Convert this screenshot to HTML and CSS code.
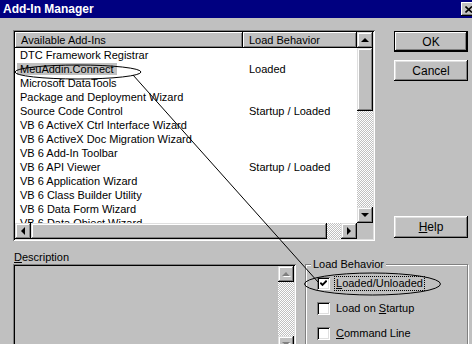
FILE: index.html
```html
<!DOCTYPE html>
<html lang="en">

<head>
    <meta charset="UTF-8">
    <title>Add-In Manager</title>
    <link rel="stylesheet" href="styles.css">
</head>

<body>
    <div class="titlebar">
        <span class="title">Add-In Manager</span>
        <span class="close">
            <svg width="8" height="7" viewBox="0 0 8 7"><path d="M0.5 0.5 L7 6.5 M7 0.5 L0.5 6.5" stroke="#000" stroke-width="1.6" /></svg>
        </span>
    </div>

    <div class="main">
        <div class="listbox">
            <div class="listarea">
                <div class="row head">
                    <div class="c1">Available Add-Ins</div>
                    <div class="c2">Load Behavior</div>
                </div>
                <div class="row"><div class="c1"><span>DTC Framework Registrar</span></div><div class="c2"></div></div>
                <div class="row"><div class="c1"><span class="sel">MeuAddin.Connect</span></div><div class="c2">Loaded</div></div>
                <div class="row"><div class="c1"><span>Microsoft DataTools</span></div><div class="c2"></div></div>
                <div class="row"><div class="c1"><span>Package and Deployment Wizard</span></div><div class="c2"></div></div>
                <div class="row"><div class="c1"><span>Source Code Control</span></div><div class="c2">Startup / Loaded</div></div>
                <div class="row"><div class="c1"><span>VB 6 ActiveX Ctrl Interface Wizard</span></div><div class="c2"></div></div>
                <div class="row"><div class="c1"><span>VB 6 ActiveX Doc Migration Wizard</span></div><div class="c2"></div></div>
                <div class="row"><div class="c1"><span>VB 6 Add-In Toolbar</span></div><div class="c2"></div></div>
                <div class="row"><div class="c1"><span>VB 6 API Viewer</span></div><div class="c2">Startup / Loaded</div></div>
                <div class="row"><div class="c1"><span>VB 6 Application Wizard</span></div><div class="c2"></div></div>
                <div class="row"><div class="c1"><span>VB 6 Class Builder Utility</span></div><div class="c2"></div></div>
                <div class="row"><div class="c1"><span>VB 6 Data Form Wizard</span></div><div class="c2"></div></div>
                <div class="row"><div class="c1"><span>VB 6 Data Object Wizard</span></div><div class="c2"></div></div>
            </div>
            <div class="vscroll">
                <div class="sbtn"><i class="arrow up"></i></div>
                <div class="thumb vthumb"></div>
                <div class="track"></div>
                <div class="sbtn"><i class="arrow down"></i></div>
            </div>
            <div class="hscroll">
                <div class="sbtn"><i class="arrow left"></i></div>
                <div class="thumb hthumb"></div>
                <div class="track"></div>
                <div class="sbtn"><i class="arrow right"></i></div>
            </div>
            <div class="corner"></div>
        </div>

        <div class="buttons">
            <button class="btn default">OK</button>
            <button class="btn cancel">Cancel</button>
            <button class="btn help"><u>H</u>elp</button>
        </div>
    </div>

    <div class="lower">
        <div class="desc">
            <div class="desc-label"><u>D</u>escription</div>
            <div class="desc-box">
                <div class="desc-text"></div>
                <div class="vscroll off">
                    <div class="sbtn"><i class="arrow up"></i></div>
                    <div class="track"></div>
                    <div class="sbtn"><i class="arrow down"></i></div>
                </div>
            </div>
        </div>

        <fieldset class="group">
            <legend>Load Behavior</legend>
            <div class="check">
                <span class="box">
                    <svg width="7" height="7" viewBox="0 0 7 7"><path d="M0.3 2.6 L2.5 4.9 L6.7 0.6" fill="none" stroke="#000" stroke-width="1.9" /></svg>
                </span>
                <span class="focus"><u>L</u>oaded/Unloaded</span>
            </div>
            <div class="check">
                <span class="box"></span>
                <span class="label">Load on <u>S</u>tartup</span>
            </div>
            <div class="check">
                <span class="box"></span>
                <span class="label"><u>C</u>ommand Line</span>
            </div>
        </fieldset>
    </div>

    <!-- hand drawn marks over the dialog -->
    <svg class="marks" width="472" height="344" viewBox="0 0 472 344">
        <ellipse cx="78" cy="72" rx="63" ry="7" fill="none" stroke="#000" stroke-width="1" />
        <ellipse cx="372.5" cy="284" rx="68" ry="11" fill="none" stroke="#000" stroke-width="1" />
        <line x1="133" y1="75" x2="318" y2="282" stroke="#000" stroke-width="1" />
    </svg>
</body>

</html>
```

FILE: styles.css
```css
html,
body {
    margin: 0;
    overflow: hidden;
}

body {
    position: relative;
    width: 472px;
    height: 344px;
    background: #c0c0c0;
    font-family: "Liberation Sans", Arial, sans-serif;
    font-size: 11px;
    color: #000;
}

.titlebar {
    display: flex;
    align-items: center;
    justify-content: space-between;
    height: 18px;
    padding-left: 3px;
    background: #000080;
    color: #fff;
    font-weight: bold;
    font-size: 12px;
    line-height: 18px;
    overflow: hidden;
}

.close {
    display: flex;
    align-items: center;
    justify-content: center;
    flex-shrink: 0;
    width: 16px;
    height: 14px;
    margin-right: -5px;
    background: #c0c0c0;
    box-shadow: inset -1px -1px #000, inset 1px 1px #fff, inset -2px -2px #808080;
}

.main {
    display: flex;
    padding: 12px 0 0 13px;
}

/* list with its two scroll bars */
.listbox {
    display: grid;
    grid-template-columns: 1fr 16px;
    grid-template-rows: 1fr 16px;
    box-sizing: border-box;
    width: 362px;
    height: 211px;
    padding: 2px;
    background: #fff;
    box-shadow: inset 1px 1px #808080, inset -1px -1px #fff, inset 2px 2px #000, inset -2px -2px #dfdfdf;
}

.listarea {
    overflow: hidden;
}

.row {
    display: flex;
    height: 14px;
    line-height: 14px;
    white-space: nowrap;
}

.c1 {
    width: 228px;
    padding-left: 2px;
    box-sizing: border-box;
}

.c1 span {
    padding: 0 3px;
}

.c1 .sel {
    background: #c0c0c0;
}

.c2 {
    width: 114px;
    padding-left: 6px;
    box-sizing: border-box;
}

.row.head {
    height: 16px;
    line-height: 16px;
}

.head .c1,
.head .c2 {
    background: #c0c0c0;
    padding-left: 6px;
    box-shadow: inset -1px -1px #000, inset 1px 1px #fff, inset -2px -2px #808080;
}

.vscroll {
    display: flex;
    flex-direction: column;
}

.hscroll {
    display: flex;
}

.sbtn {
    display: flex;
    align-items: center;
    justify-content: center;
    flex-shrink: 0;
    width: 16px;
    height: 16px;
    background: #c0c0c0;
    box-shadow: inset -1px -1px #000, inset 1px 1px #dfdfdf, inset -2px -2px #808080, inset 2px 2px #fff;
}

.thumb {
    flex-shrink: 0;
    background: #c0c0c0;
    box-shadow: inset -1px -1px #000, inset 1px 1px #dfdfdf, inset -2px -2px #808080, inset 2px 2px #fff;
}

.vthumb {
    height: 63px;
}

.hthumb {
    width: 296px;
}

.track {
    flex: 1;
    background: repeating-conic-gradient(#c0c0c0 0% 25%, #fff 0% 50%) 0 0 / 2px 2px;
}

.corner {
    background: #c0c0c0;
}

.arrow {
    width: 0;
    height: 0;
    border: 0 solid transparent;
}

.arrow.up {
    border-width: 0 4px 4px 4px;
    border-bottom-color: #000;
    margin-top: -1px;
}

.arrow.down {
    border-width: 4px 4px 0 4px;
    border-top-color: #000;
}

.arrow.left {
    border-width: 4px 4px 4px 0;
    border-right-color: #000;
}

.arrow.right {
    border-width: 4px 0 4px 4px;
    border-left-color: #000;
}

.off .arrow.up {
    border-bottom-color: #808080;
    filter: drop-shadow(1px 1px 0 #fff);
}

.off .arrow.down {
    border-top-color: #808080;
    filter: drop-shadow(1px 1px 0 #fff);
}

/* OK / Cancel / Help */
.buttons {
    display: flex;
    flex-direction: column;
    width: 74px;
    height: 211px;
    margin-left: 19px;
}

.btn {
    height: 21px;
    padding: 0;
    border: 0;
    background: #c0c0c0;
    font-family: "Liberation Sans", Arial, sans-serif;
    font-size: 12px;
    color: #000;
    box-shadow: inset -1px -1px #000, inset 1px 1px #fff, inset -2px -2px #808080, inset 2px 2px #dfdfdf;
}

.btn.default {
    margin-top: 1px;
    box-shadow: inset 0 0 0 1px #000, inset -2px -2px #000, inset 2px 2px #fff, inset -3px -3px #808080;
}

.btn.cancel {
    margin-top: 8px;
}

.btn.help {
    height: 22px;
    margin-top: auto;
    margin-bottom: 3px;
}

/* description + load behavior */
.lower {
    display: flex;
    padding: 9px 0 0 13px;
}

.desc {
    width: 283px;
}

.desc-label {
    height: 14px;
    line-height: 14px;
    padding-left: 1px;
}

.desc-box {
    display: flex;
    box-sizing: border-box;
    height: 90px;
    padding: 2px;
    background: #c0c0c0;
    box-shadow: inset 1px 1px #808080, inset -1px -1px #fff, inset 2px 2px #000, inset -2px -2px #dfdfdf;
}

.desc-text {
    flex: 1;
}

.group {
    box-sizing: border-box;
    width: 163px;
    min-width: 0;
    margin: 7px 0 0 9px;
    padding: 0 0 0 5px;
    border: 1px solid #808080;
    box-shadow: inset 1px 1px #fff, 1px 1px #fff;
}

.group legend {
    padding: 0 2px;
    line-height: 14px;
    background: #c0c0c0;
}

.check {
    display: flex;
    align-items: center;
    height: 25px;
    padding-left: 6px;
}

.box {
    display: flex;
    align-items: center;
    justify-content: center;
    width: 13px;
    height: 13px;
    margin-right: 4px;
    background: #fff;
    box-shadow: inset 1px 1px #808080, inset -1px -1px #fff, inset 2px 2px #000, inset -2px -2px #dfdfdf;
}

.focus {
    padding: 0 1px;
    border: 1px dotted #000;
    line-height: 13px;
}

.label {
    padding: 0 2px;
    line-height: 15px;
    font-size: 11px;
}

.marks {
    position: absolute;
    top: 0;
    left: 0;
    pointer-events: none;
}
```
